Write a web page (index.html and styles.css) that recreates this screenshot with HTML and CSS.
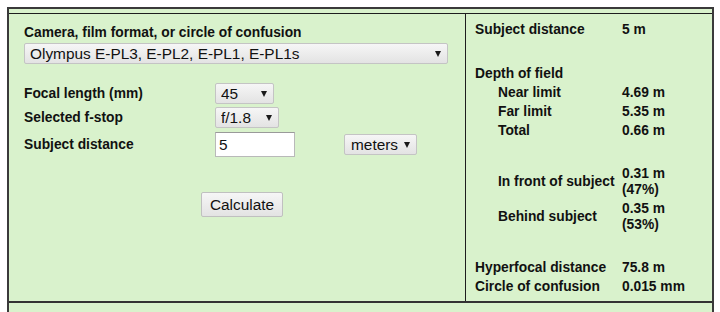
FILE: index.html
```html
<!DOCTYPE html>
<html>
	<head>
		<meta charset="UTF-8">
		<title>Depth of field calculator</title>
		<link rel="stylesheet" href="styles.css">
	</head>
	<body>
		<div class="frame">
			<div class="strip"></div>
			<div class="main">
				<div class="inputs">
					<div class="heading">Camera, film format, or circle of confusion</div>
					<span class="sel big">
						<select>
							<option>Olympus E-PL3, E-PL2, E-PL1, E-PL1s</option>
						</select>
					</span>
					<div class="form">
						<label>Focal length (mm)</label>
						<span class="sel focal"><select><option>45</option></select></span>
						<span></span>

						<label>Selected f-stop</label>
						<span class="sel fstop"><select><option>f/1.8</option></select></span>
						<span></span>

						<label>Subject distance</label>
						<input class="dist" type="text" value="5">
						<span class="sel units"><select><option>meters</option></select></span>
					</div>
					<button class="calc">Calculate</button>
				</div>
				<div class="results">
					<div class="rgroup">
						<span class="k">Subject distance</span><span class="v">5 m</span>
					</div>
					<div class="rgroup dof">
						<span class="k">Depth of field</span><span class="v"></span>
						<span class="k sub">Near limit</span><span class="v">4.69 m</span>
						<span class="k sub">Far limit</span><span class="v">5.35 m</span>
						<span class="k sub">Total</span><span class="v">0.66 m</span>
					</div>
					<div class="rgroup split">
						<span class="k sub">In front of subject</span><span class="v">0.31 m<br>(47%)</span>
						<span class="k sub">Behind subject</span><span class="v">0.35 m<br>(53%)</span>
					</div>
					<div class="rgroup split">
						<span class="k">Hyperfocal distance</span><span class="v">75.8 m</span>
						<span class="k">Circle of confusion</span><span class="v">0.015 mm</span>
					</div>
				</div>
			</div>
			<div class="strip low"></div>
		</div>
	</body>
</html>
```

FILE: styles.css
```css
body{
	margin: 0;
	background: #fff;
	font-family: "Liberation Sans", Arial, sans-serif;
	color: #111;
}
.frame{
	margin: 7px 0 0 7px;
	width: 703px;
	border: 2px solid #3a3a3a;
	border-bottom: none;
	background: #d9f2cc;
}
.strip{
	height: 4px;
	border-bottom: 1px solid #1e1e1e;
}
.strip.low{
	height: 12px;
	border-bottom: none;
}
.main{
	display: flex;
	height: 287px;
	border-bottom: 2px solid #333;
}

/* left side: the form */
.inputs{
	width: 441px;
	padding: 11px 0 0 15px;
	border-right: 1px solid #1e1e1e;
}
.heading{
	font-size: 13.8px;
	font-weight: bold;
	line-height: 16px;
	margin-bottom: 2px;
}
.sel{
	position: relative;
	display: inline-block;
	vertical-align: middle;
}
.sel::after{
	content: "";
	position: absolute;
	top: 8px;
	right: 7px;
	border-left: 3.5px solid transparent;
	border-right: 3.5px solid transparent;
	border-top: 6px solid #1a1a1a;
	pointer-events: none;
}
select{
	-webkit-appearance: none;
	appearance: none;
	display: block;
	height: 21px;
	margin: 0;
	padding: 0 0 0 5px;
	font-family: "Liberation Sans", Arial, sans-serif;
	font-size: 15.4px;
	color: #111;
	background: linear-gradient(#f6f6f6, #e3e3e3);
	border: 1px solid #c4c4c4;
	border-radius: 2px;
}
.big select{
	width: 424px;
}
.focal select{
	width: 59px;
}
.fstop select{
	width: 64px;
}
.units select{
	width: 73px;
	padding-left: 6px;
}
.form{
	display: grid;
	grid-template-columns: 191px 129px auto;
	row-gap: 3px;
	align-items: center;
	margin-top: 19px;
}
.form label{
	font-size: 13.8px;
	font-weight: bold;
	line-height: 16px;
	padding-top: 1px;
}
.form .sel{
	justify-self: start;
}
.dist{
	box-sizing: border-box;
	width: 80px;
	height: 25px;
	margin: 1px 0 0;
	padding: 0 3px;
	font-family: "Liberation Sans", Arial, sans-serif;
	font-size: 15.4px;
	color: #111;
	background: #fff;
	border: 1px solid #b9b9b9;
	border-top-color: #9a9a9a;
}
.calc{
	display: block;
	width: 82px;
	height: 25px;
	margin: 35px 0 0 177px;
	padding: 0;
	font-family: "Liberation Sans", Arial, sans-serif;
	font-size: 15.4px;
	color: #111;
	background: linear-gradient(#f6f6f6, #e3e3e3);
	border: 1px solid #c0c0c0;
	border-radius: 2px;
}

/* right side: the results */
.results{
	flex: 1;
	padding: 8px 0 0 9px;
	font-size: 13.8px;
	font-weight: bold;
	line-height: 16px;
}
.rgroup{
	display: grid;
	grid-template-columns: 147px auto;
	row-gap: 3px;
	align-items: center;
}
.rgroup.dof{
	margin-top: 28px;
}
.rgroup.split{
	margin-top: 27px;
}
.k.sub{
	padding-left: 23px;
}
```
